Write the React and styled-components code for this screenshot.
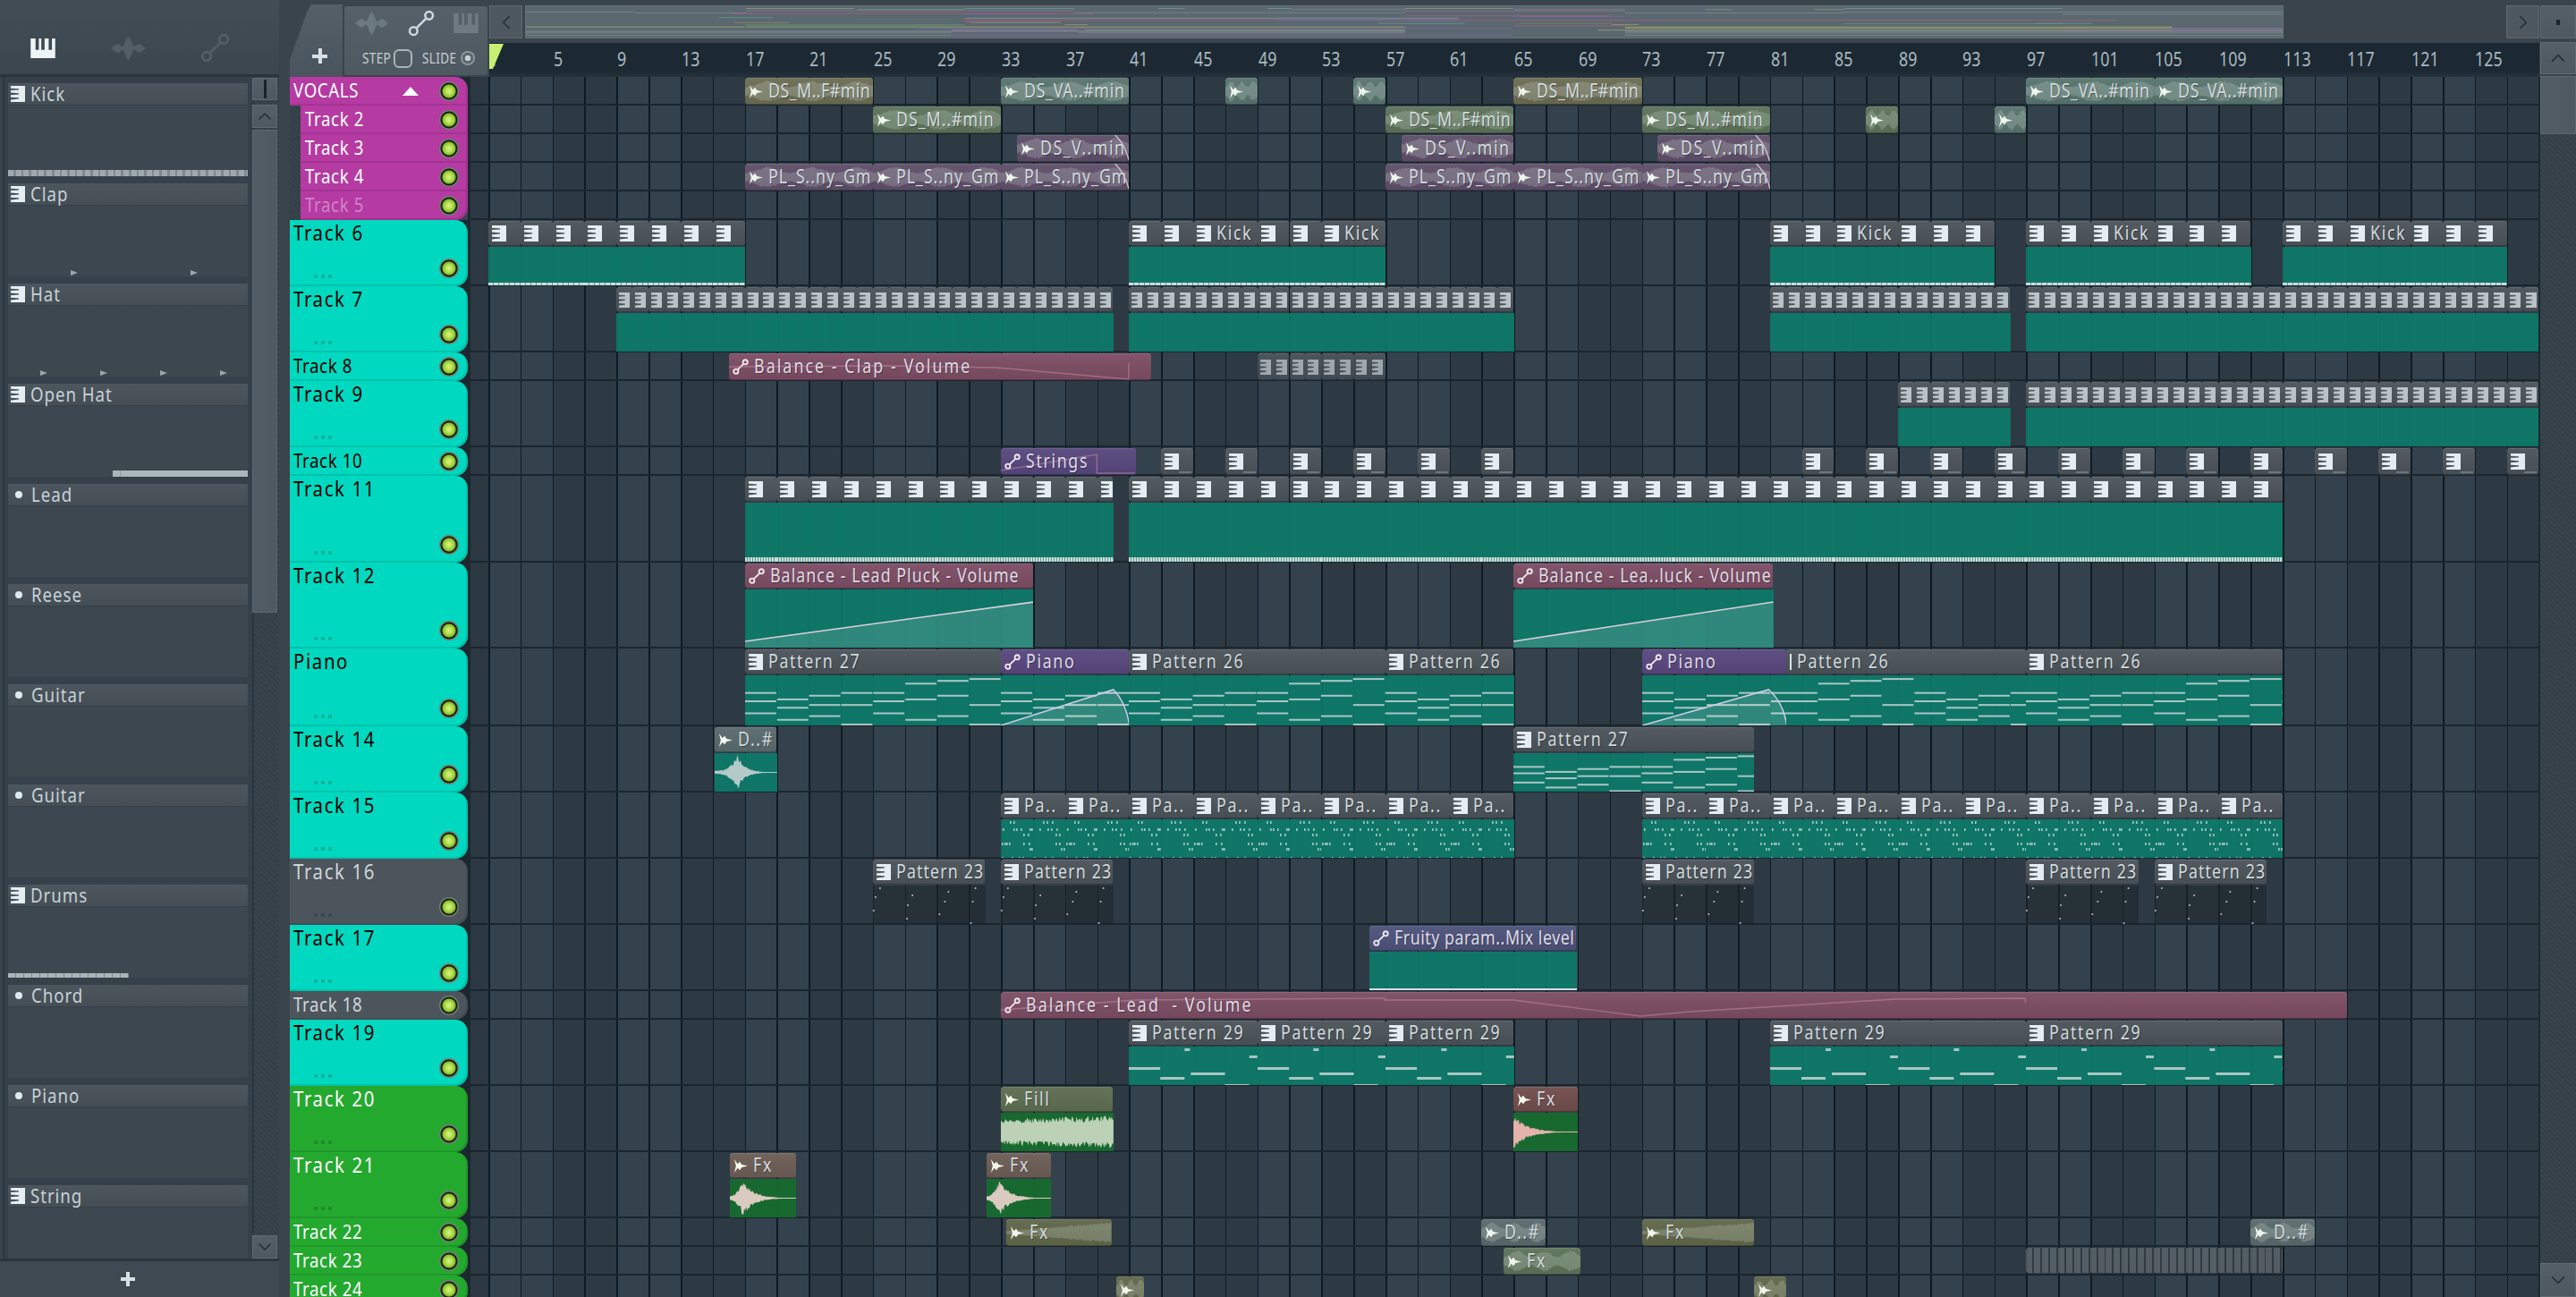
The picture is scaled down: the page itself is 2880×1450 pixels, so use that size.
import React from "react";
import styled, { createGlobalStyle, css } from "styled-components";
import { ChevronUp, ChevronDown, ChevronLeft, ChevronRight } from "lucide-react";

const BAR = 17.91;
const GUTTER = 20;
const barX = (bar) => (bar - 1) * BAR;

const GlobalStyle = createGlobalStyle`
  html, body {
    margin: 0;
    padding: 0;
    background: #3a444c;
  }
  * {
    box-sizing: border-box;
  }
`;

const FONT = `"Noto Sans", "Open Sans", "Liberation Sans", sans-serif`;

const hatch = `repeating-linear-gradient(45deg, #3a444c 0, #3a444c 2px, #343e46 2px, #343e46 4px)`;

// the app's face is a narrow one, nothing installed is that narrow
const narrowText = (lift = 0) => css`
  display: inline-block;
  flex: none;
  white-space: pre;
  transform-origin: 0 50%;
  transform: translateY(${lift}px) scaleX(0.85);
`;

/* ---------- drawings ---------- */

function PatternIcon({ w = 16, h = 18, dim }) {
  return (
    <svg width={w} height={h} viewBox="0 0 16 18" preserveAspectRatio="none" style={{ flex: "none", opacity: dim ? 0.72 : 1 }}>
      <path
        fill="#e4edf1"
        d="M0 0H16V18H0V15.4L9 14.6V13.2L0 12.8V10.2L9 9.6V8.2L0 7.6V5L9 4.6V3.2L0 2.8Z"
      />
    </svg>
  );
}

function AudioIcon() {
  return (
    <svg width="16" height="15" viewBox="0 0 17 14" preserveAspectRatio="none" style={{ flex: "none" }}>
      <path fill="#f6faf1" d="M1 0L5 5L7.5 2.5L10 5.5L17 7L10 8.5L7.5 11.5L5 9L1 14L3 7Z" />
    </svg>
  );
}

function AutoIcon({ size = 18, color = "#efe6ee", width = 1.9 }) {
  return (
    <svg width={size} height={size} viewBox="0 0 18 18" fill="none" style={{ flex: "none" }} stroke={color} strokeWidth={width}>
      <circle cx="3.8" cy="14.2" r="2.6" />
      <circle cx="14.2" cy="3.8" r="2.6" />
      <path d="M5.8 12.2L12.2 5.8" />
    </svg>
  );
}

function PianoIcon({ w, h, color }) {
  return (
    <svg width={w} height={h} viewBox="0 0 30 24" style={{ flex: "none" }}>
      <path fill={color} fillRule="evenodd" d="M0 0H30V24H0ZM6 0V14H10V0ZM13 0V14H17V0ZM22 0V14H26V0Z" />
    </svg>
  );
}

function WaveIcon({ w, h, color }) {
  return (
    <svg width={w} height={h} viewBox="0 0 40 28" style={{ flex: "none" }}>
      <path
        fill={color}
        d="M0 14C3 12 5 9 8 9C11 9 11 12 13 12C15 12 16 5 20 0C24 5 25 12 27 12C29 12 29 9 32 9C35 9 37 12 40 14C37 16 35 19 32 19C29 19 29 16 27 16C25 16 24 23 20 28C16 23 15 16 13 16C11 16 11 19 8 19C5 19 3 16 0 14Z"
      />
    </svg>
  );
}

const noise = (i, seed) => {
  const v = Math.sin(i * 12.9898 + seed * 78.233) * 43758.5453;
  return v - Math.floor(v);
};

function wavePoints(w, h, env, seed, rough = 0.22) {
  const top = [];
  const bottom = [];
  const mid = h / 2;
  for (let x = 0; x <= w; x += 1) {
    const t = x / Math.max(w, 1);
    const a = env(t) * mid;
    top.push(`${x},${(mid - a * (1 - rough + rough * noise(x, seed))).toFixed(1)}`);
    bottom.push(`${x},${(mid + a * (1 - rough + rough * noise(x + 400, seed))).toFixed(1)}`);
  }
  return top.concat(bottom.reverse()).join(" ");
}

const envelopes = {
  fill: (t) => 0.68 + 0.2 * t,
  decay: (t) => Math.max(0.03, 0.92 * Math.exp(-t * 4.6)),
  bell: (t) => Math.max(0.03, t < 0.2 ? 0.12 + 0.85 * Math.pow(t / 0.2, 2) : 0.97 * Math.exp(-(t - 0.2) * 6)),
  mid: (t) => Math.max(0.03, t < 0.36 ? 0.1 + 0.85 * Math.pow(t / 0.36, 3) : 0.95 * Math.exp(-(t - 0.36) * 8)),
  swell: (t) => 0.12 + 0.68 * t,
  hump: (t) => 0.35 + 0.45 * Math.sin(t * 9) * Math.sin(t * 9),
};

const NOTES_26 = [
  [18, 27, 40],
  [25, 34, 47],
  [21, 31, 43],
  [18, 31, 52],
  [18, 27, 40],
  [8, 25, 47],
  [5, 21, 43],
  [3, 31, 52],
];

const NOTES_29 = [
  [0, 35, 23],
  [35, 27, 34],
  [62, 6, 2],
  [69, 38, 29],
  [107, 27, 42],
  [134, 9, 10],
];

const DOT_ROWS = [
  [2, [10, 14, 47, 51, 57]],
  [10, [2, 14, 17, 22, 32, 34, 43, 52, 56, 62]],
  [16, [25, 30, 61, 65]],
  [26, [1, 4, 6, 9, 25, 31, 61, 65]],
  [32, [32, 34, 67, 70]],
  [42, [1, 12, 20, 24, 37, 49, 57]],
];

const SPARSE_DOTS = [
  [7, 2], [2, 12], [43, 10], [38, 21], [0, 27], [37, 36], [83, 6], [79, 17], [73, 31], [113, 2], [110, 17], [108, 41],
];

function NotesSvg({ kind, width, height, phase = 0 }) {
  const rects = [];
  if (kind === "notes26") {
    const scale = height / 54;
    const first = Math.floor(phase / 2);
    for (let c = 0; c * 2 * BAR < width; c += 1) {
      const col = NOTES_26[(first + c) % 8];
      col.forEach((y, i) => {
        rects.push(<rect key={`${c}-${i}`} x={c * 2 * BAR} y={y * scale} width={2 * BAR - 1} height="2" fill="#a9c7c2" />);
      });
    }
  }
  if (kind === "notes29") {
    for (let p = 0; p * 143.3 < width; p += 1) {
      NOTES_29.forEach(([x, w, y], i) => {
        rects.push(<rect key={`${p}-${i}`} x={p * 143.3 + x} y={y} width={w} height="3" fill="#a8c6c1" />);
      });
    }
  }
  if (kind === "dots") {
    for (let p = 0; p * 71.6 < width; p += 1) {
      DOT_ROWS.forEach(([y, xs], r) => {
        xs.forEach((x, i) => {
          rects.push(<rect key={`${p}-${r}-${i}`} x={p * 71.6 + x} y={y} width="1.6" height="3" fill="#a6c9c3" />);
        });
      });
    }
  }
  if (kind === "sparse") {
    SPARSE_DOTS.forEach(([x, y], i) => {
      rects.push(<rect key={i} x={x} y={y} width="1.6" height="2" fill="#aeb8bc" />);
    });
  }
  return <BodySvg viewBox={`0 0 ${width} ${height}`}>{rects}</BodySvg>;
}

/* ---------- clip data ---------- */

const TONES = {
  grey: "#4a5258",
  olive: "#6a6b52",
  sage: "#57746d",
  moss: "#5b7258",
  plum: "#5e4e69",
  pink: "#7b4c62",
  violet: "#56467c",
  indigo: "#4c5179",
  umber: "#6b5c55",
  rust: "#704c4b",
  fern: "#5d6c4f",
  slate: "#59696b",
  khaki: "#606649",
};

const labelSpacing = (label) => {
  if (/^DS_M\.\.F/.test(label)) return 0.5;
  if (/^DS_VA/.test(label)) return 0.75;
  if (/^DS_M\.\.#/.test(label)) return 1.1;
  if (/^DS_V\.\./.test(label)) return 1.7;
  if (/^PL_/.test(label)) return 1.1;
  if (/^Fruity/.test(label)) return 0.6;
  if (label === "Pattern 23") return 1.3;
  if (/luck/.test(label)) return 1.2;
  if (/^Balance/.test(label)) return 2.4;
  return 1.9;
};

const audio = (from, to, label, tone, extra = {}) => ({ kind: "audio", from, to, label, tone, ...extra });
const auto = (from, to, label, tone, extra = {}) => ({ kind: "auto", from, to, label, tone, ...extra });
const pat = (from, to, label, extra = {}) => ({ kind: "pattern", from, to, label, tone: "grey", ...extra });

// a run of pattern clips with the same length
const run = (from, to, step, extra = {}, labelAt) => {
  const list = [];
  for (let b = from, i = 0; b < to; b += step, i += 1) {
    list.push(pat(b, Math.min(b + step, to), labelAt ? labelAt(i) : "", extra));
  }
  return list;
};

const kicks = (from, ends) => {
  const list = [];
  let b = from;
  ends.forEach((len) => {
    list.push(pat(b, b + len, len === 4 ? "Kick" : "", { body: "strip" }));
    b += len;
  });
  return list;
};

const narrow = { narrow: true, body: "plain" };
const lane11 = { body: "dense" };

const tracks = [
  {
    name: "VOCALS", h: 32, color: "magenta", group: "head",
    clips: [
      audio(17, 25, "DS_M..F#min", "olive"),
      audio(33, 41, "DS_VA..#min", "sage"),
      audio(47, 49, "", "sage"),
      audio(55, 57, "", "sage"),
      audio(65, 73, "DS_M..F#min", "olive"),
      audio(97, 105, "DS_VA..#min", "sage"),
      audio(105, 113, "DS_VA..#min", "sage"),
    ],
  },
  {
    name: "Track 2", h: 32, color: "magenta", group: "child",
    clips: [
      audio(25, 33, "DS_M..#min", "moss"),
      audio(57, 65, "DS_M..F#min", "moss"),
      audio(73, 81, "DS_M..#min", "moss"),
      audio(87, 89, "", "moss"),
      audio(95, 97, "", "sage"),
    ],
  },
  {
    name: "Track 3", h: 32, color: "magenta", group: "child",
    clips: [
      audio(34, 41, "DS_V..min", "plum", { fade: true }),
      audio(58, 65, "DS_V..min", "plum"),
      audio(74, 81, "DS_V..min", "plum", { fade: true }),
    ],
  },
  {
    name: "Track 4", h: 32, color: "magenta", group: "child",
    clips: [
      audio(17, 25, "PL_S..ny_Gm", "plum"),
      audio(25, 33, "PL_S..ny_Gm", "plum"),
      audio(33, 41, "PL_S..ny_Gm", "plum", { fade: true }),
      audio(57, 65, "PL_S..ny_Gm", "plum"),
      audio(65, 73, "PL_S..ny_Gm", "plum"),
      audio(73, 81, "PL_S..ny_Gm", "plum", { fade: true }),
    ],
  },
  { name: "Track 5", h: 32, color: "magenta", group: "last", muted: true, clips: [] },
  {
    name: "Track 6", h: 74, color: "teal",
    clips: [
      ...run(1, 17, 2, { body: "strip" }),
      ...kicks(41, [2, 2, 4, 2, 2, 4]),
      ...kicks(81, [2, 2, 4, 2, 2, 2]),
      ...kicks(97, [2, 2, 4, 2, 2, 2]),
      ...kicks(113, [2, 2, 4, 2, 2, 2]),
    ],
  },
  {
    name: "Track 7", h: 74, color: "teal",
    clips: [...run(9, 40, 1, narrow), ...run(41, 65, 1, narrow), ...run(81, 96, 1, narrow), ...run(97, 130, 1, narrow)],
  },
  {
    name: "Track 8", h: 32, color: "teal",
    clips: [
      auto(16, 42.4, "Balance - Clap - Volume", "pink", { trace: [[0, 15], [180, 14], [300, 16], [447, 29], [447, 11]] }),
      ...run(49, 57, 1, { narrow: true, faded: true }),
    ],
  },
  { name: "Track 9", h: 74, color: "teal", clips: [...run(89, 96, 1, narrow), ...run(97, 130, 1, narrow)] },
  {
    name: "Track 10", h: 32, color: "teal",
    clips: [
      auto(33, 41.4, "Strings", "violet", { trace: [[0, 25], [107, 7], [107, 28], [150, 28]] }),
      ...[43, 47, 51, 55, 59, 63, 83, 87, 91, 95, 99, 103, 107, 111, 115, 119, 123, 127].map((b) => pat(b, b + 2, "")),
    ],
  },
  { name: "Track 11", h: 97, color: "teal", clips: [...run(17, 40, 2, lane11), ...run(41, 113, 2, lane11)] },
  {
    name: "Track 12", h: 96, color: "teal",
    clips: [
      auto(17, 35, "Balance - Lead Pluck - Volume", "pink", { body: "ramp" }),
      auto(65, 81.2, "Balance - Lea..luck - Volume", "pink", { body: "ramp" }),
    ],
  },
  {
    name: "Piano", h: 87, color: "teal",
    clips: [
      pat(17, 33, "Pattern 27", { body: "notes26" }),
      auto(33, 41, "Piano", "violet", { body: "peak", notes: "notes26" }),
      pat(41, 57, "Pattern 26", { body: "notes26" }),
      pat(57, 65, "Pattern 26", { body: "notes26" }),
      auto(73, 82, "Piano", "violet", { body: "peak", notes: "notes26" }),
      pat(82, 97, "Pattern 26", { body: "notes26", noIcon: true, phase: 8 }),
      pat(97, 113, "Pattern 26", { body: "notes26" }),
    ],
  },
  {
    name: "Track 14", h: 74, color: "teal",
    clips: [
      audio(15.1, 19, "D..#", "slate", { body: "wave", env: "mid", waveColor: "#b4cac8" }),
      pat(65, 80, "Pattern 27", { body: "notes26" }),
    ],
  },
  { name: "Track 15", h: 74, color: "teal", clips: [...run(33, 65, 4, { body: "dots" }, () => "Pa.."), ...run(73, 113, 4, { body: "dots" }, () => "Pa..")] },
  {
    name: "Track 16", h: 74, color: "grey",
    clips: [
      pat(25, 32, "Pattern 23", { body: "sparse" }),
      pat(33, 40, "Pattern 23", { body: "sparse" }),
      pat(73, 80, "Pattern 23", { body: "sparse" }),
      pat(97, 104, "Pattern 23", { body: "sparse" }),
      pat(105, 112, "Pattern 23", { body: "sparse" }),
    ],
  },
  {
    name: "Track 17", h: 74, color: "teal",
    clips: [auto(56, 68.9, "Fruity param..Mix level", "indigo", { body: "flat" })],
  },
  {
    name: "Track 18", h: 32, color: "grey",
    clips: [
      auto(33, 117, "Balance - Lead  - Volume", "pink", {
        trace: [[0, 20], [150, 9], [429, 7], [429, 9], [573, 9], [715, 27], [770, 22], [1000, 8], [1145, 7], [1145, 12]],
      }),
    ],
  },
  {
    name: "Track 19", h: 74, color: "teal",
    clips: [
      pat(41, 49, "Pattern 29", { body: "notes29" }),
      pat(49, 57, "Pattern 29", { body: "notes29" }),
      pat(57, 65, "Pattern 29", { body: "notes29" }),
      pat(81, 97, "Pattern 29", { body: "notes29" }),
      pat(97, 113, "Pattern 29", { body: "notes29" }),
    ],
  },
  {
    name: "Track 20", h: 74, color: "green",
    clips: [
      audio(33, 40, "Fill", "fern", { body: "wave", env: "fill", waveColor: "#bcd1b6" }),
      audio(65, 69, "Fx", "rust", { body: "wave", env: "decay", waveColor: "#e3b3ac" }),
    ],
  },
  {
    name: "Track 21", h: 74, color: "green",
    clips: [
      audio(16.1, 20.2, "Fx", "umber", { body: "wave", env: "bell", waveColor: "#dacac0" }),
      audio(32.1, 36.1, "Fx", "umber", { body: "wave", env: "bell", waveColor: "#dacac0" }),
    ],
  },
  {
    name: "Track 22", h: 32, color: "green",
    clips: [
      audio(33.35, 39.9, "Fx", "khaki", { env: "swell" }),
      audio(63, 67, "D..#", "slate"),
      audio(73, 80, "Fx", "khaki", { env: "swell" }),
      audio(111, 115, "D..#", "slate"),
    ],
  },
  {
    name: "Track 23", h: 32, color: "green",
    clips: [audio(64.4, 69.2, "Fx", "moss"), { kind: "pills", from: 97, to: 113 }],
  },
  {
    name: "Track 24", h: 32, color: "green",
    clips: [audio(40.2, 41.95, "", "khaki"), audio(80, 82, "", "khaki")],
  },
];

const channels = [
  { name: "Kick", icon: "pattern", notes: "dense" },
  { name: "Clap", icon: "pattern", notes: "clap" },
  { name: "Hat", icon: "pattern", notes: "hat" },
  { name: "Open Hat", icon: "pattern", notes: "long" },
  { name: "Lead", icon: "dot" },
  { name: "Reese", icon: "dot" },
  { name: "Guitar", icon: "dot" },
  { name: "Guitar", icon: "dot" },
  { name: "Drums", icon: "pattern", notes: "half" },
  { name: "Chord", icon: "dot" },
  { name: "Piano", icon: "dot" },
  { name: "String", icon: "pattern" },
];

const rulerLabels = [];
for (let b = 1; b <= 125; b += 4) rulerLabels.push(b);

const overviewLines = [
  [196, 277, 25, "#9c9b69"], [360, 442, 25, "#6f9c90"], [505, 525, 25, "#6f9c90"], [587, 605, 25, "#6f9c90"], [690, 771, 25, "#9c9b69"], [1019, 1183, 25, "#6f9c90"],
  [280, 360, 29, "#7f9c78"], [605, 690, 29, "#8f7f97"], [772, 855, 29, "#8f7f97"], [915, 935, 29, "#7f9c78"], [997, 1019, 29, "#7f9c78"],
  [196, 360, 33, "#8a7a97"], [360, 442, 33, "#8a7a97"], [690, 855, 34, "#8a7a97"],
  [31, 113, 37, "#7e8b90"], [113, 196, 41, "#7e8b90"], [855, 1019, 41, "#7e8b90"], [1019, 1348, 38, "#7e8b90"], [1183, 1348, 46, "#7e8b90"],
  [185, 457, 43, "#b45a80"], [360, 430, 46, "#7f62a8"], [442, 690, 40, "#7e8b90"], [690, 845, 52, "#b45a80"], [770, 855, 54, "#7f62a8"],
  [176, 216, 58, "#5f9c94"], [278, 350, 63, "#66757a"], [360, 730, 60, "#8d99a0"],
  [360, 1224, 68, "#b45a80"], [595, 730, 66, "#7772b0"], [1019, 1183, 80, "#77858a"], [360, 432, 73, "#b45a80"],
  [187, 228, 76, "#9a8a70"], [365, 432, 76, "#6f9c70"], [670, 735, 79, "#5f9c94"], [775, 845, 79, "#6f8c58"], [1163, 1205, 79, "#5f9c94"],
  [195, 360, 85, "#5fa868"], [435, 452, 84, "#a09a70"], [845, 865, 84, "#a09a70"], [772, 855, 88, "#b45a80"],
  [31, 195, 92, "#a7a96c"], [196, 360, 92, "#a7a96c"], [360, 690, 92, "#a7a96c"], [855, 1265, 92, "#a7a96c"],
  [325, 690, 98, "#7f72b0"], [690, 770, 97, "#7f62a8"], [1265, 1348, 98, "#a07ab0"], [855, 1265, 97, "#a7a96c"],
  [350, 445, 103, "#9a7aa0"], [450, 690, 104, "#a0a080"], [835, 1265, 104, "#a0a080"], [1185, 1348, 104, "#a07ab0"],
  [31, 690, 108, "#8f9fa0"], [855, 1348, 108, "#8f9fa0"],
  [31, 350, 114, "#7d8d90"], [445, 690, 114, "#7d8d90"], [855, 1348, 114, "#7d8d90"],
  [350, 770, 122, "#8a62b0"], [31, 350, 122, "#7d8d90"], [855, 1348, 122, "#7d8d90"],
];

/* ---------- left pane ---------- */

const Page = styled.div`
  width: 2880px;
  height: 1450px;
  overflow: hidden;
  display: grid;
  grid-template-columns: 324px 1fr;
  background: #3a444c;
  font-family: ${FONT};
`;

const LeftPane = styled.div`
  display: flex;
  flex-direction: column;
  height: 1450px;
  padding-right: 12px;
`;

const LeftTabs = styled.div`
  height: 86px;
  flex: none;
  display: flex;
  align-items: center;
  padding: 24px 0 0 33px;
  gap: 61px;
  background: linear-gradient(180deg, #434d55, #3c464e);
  border-bottom: 3px solid #2b353c;
`;

const LeftBody = styled.div`
  flex: 1;
  min-height: 0;
  display: flex;
  border-bottom: 3px solid #2b353c;
  background: #2f3a41;
`;

const ChannelList = styled.div`
  width: 282px;
  padding: 7px 4px 0 8px;
  display: flex;
  flex-direction: column;
  gap: 7px;
  overflow: hidden;
  background: #35404a;
  box-shadow: inset 3px 0 0 #3a444c, inset 5px 0 0 #2b353c;
`;

const ChannelHead = styled.div`
  height: 25px;
  margin: 0 1px;
  display: flex;
  align-items: center;
  gap: 6px;
  padding-left: 3px;
  background: linear-gradient(180deg, #4d565d, #454e55);
  border-bottom: 1px solid #353f47;
  flex: none;
`;

const ChannelName = styled.span`
  ${narrowText(-1)}
  color: #c6d2d8;
  font-size: 22px;
  letter-spacing: 1.1px;
  line-height: 24px;
`;

const ChannelDot = styled.span`
  width: 8px;
  height: 8px;
  border-radius: 50%;
  background: #dcebf2;
  margin: 0 4px 0 5px;
  flex: none;
`;

const Channel = styled.div`
  flex: none;
`;

const ChannelBody = styled.div`
  height: 80px;
  background: #3d4750;
  border: 1px solid #364049;
  border-top: 0;
  display: flex;
  flex-direction: column;
  justify-content: flex-end;
`;

const DenseStrip = styled.div`
  height: 7px;
  background: repeating-linear-gradient(90deg, #a0a9ad 0, #a0a9ad 6px, #7f898f 6px, #7f898f 8.6px);
`;

const HalfStrip = styled.div`
  height: 5px;
  width: 135px;
  background: repeating-linear-gradient(90deg, #aab4b8 0, #aab4b8 8px, #7f898f 8px, #7f898f 9px);
`;

const LongNote = styled.div`
  height: 7px;
  width: 151px;
  margin-left: auto;
  background: linear-gradient(90deg, #aab6ba 0, #aab6ba 8px, #8d989d 8px, #8d989d 9px, #aab6ba 9px);
`;

const TriangleRow = styled.div`
  display: flex;
  height: 7px;
  padding-left: ${(p) => p.$offset}px;
  gap: ${(p) => p.$gap}px;
`;

const Triangle = styled.span`
  width: 0;
  height: 0;
  border-left: 8px solid #9ba6ab;
  border-top: 3.5px solid transparent;
  border-bottom: 3.5px solid transparent;
`;

const ScrollColumn = styled.div`
  width: 30px;
  padding: 1px 2px 0 0;
  display: flex;
  flex-direction: column;
  background: ${hatch};
  box-shadow: inset 2px 0 0 #2b353c;
`;

const ScrollButton = styled.div`
  height: ${(p) => p.$h}px;
  margin-top: ${(p) => p.$top || 0}px;
  flex: none;
  display: flex;
  align-items: center;
  justify-content: center;
  background: linear-gradient(180deg, #555f67, #4e5860);
  border: 1px solid #5f6a71;
  color: #1f2c35;
`;

const ScrollThumb = styled.div`
  height: ${(p) => p.$h}px;
  margin-top: 2px;
  flex: none;
  background: linear-gradient(90deg, #525c64, #4f5961);
  border: 1px solid #5c676e;
`;

const ScrollGap = styled.div`
  flex: 1;
`;

const LockBar = styled.span`
  width: 3px;
  height: 21px;
  background: #18232b;
`;

const AddBar = styled.div`
  height: 40px;
  flex: none;
  display: flex;
  align-items: center;
  justify-content: center;
  padding-right: 26px;
  background: #3f4951;
`;

const PlusMark = styled.span`
  width: ${(p) => p.$size}px;
  height: ${(p) => p.$size}px;
  display: block;
  background:
    linear-gradient(#d8e0e3, #d8e0e3) center / 100% 4px no-repeat,
    linear-gradient(#d8e0e3, #d8e0e3) center / 4px 100% no-repeat;
`;

/* ---------- playlist head ---------- */

const Playlist = styled.div`
  display: flex;
  height: 1450px;
  min-width: 0;
`;

const Arrange = styled.div`
  width: 2516px;
  display: flex;
  flex-direction: column;
  background: #1c2830;
`;

const TopBar = styled.div`
  height: 86px;
  flex: none;
  display: flex;
  background: #3a444c;
`;

const AddTab = styled.div`
  width: 59px;
  height: 81px;
  margin-top: 5px;
  flex: none;
  display: flex;
  justify-content: center;
  align-items: flex-end;
  padding: 0 0 15px 8px;
  background: linear-gradient(180deg, #555f67, #4a545c);
  clip-path: polygon(0 100%, 0 76%, 20px 8%, 24px 0, 100% 0, 100% 100%);
`;

const ToolBox = styled.div`
  width: 160px;
  height: 77px;
  margin: 7px 0 0 2px;
  flex: none;
  display: flex;
  flex-direction: column;
  padding: 5px 9px 0 10px;
  background: linear-gradient(180deg, #566069, #4e5860);
  border-radius: 2px;
`;

const ToolIcons = styled.div`
  display: flex;
  justify-content: space-between;
  align-items: center;
  height: 28px;
`;

const ToolSwitches = styled.div`
  display: flex;
  align-items: center;
  margin-top: 14px;
  padding-left: 10px;
`;

const ToolLabel = styled.span`
  ${narrowText(0)}
  width: ${(p) => p.$w}px;
  color: #c8d1d5;
  font-size: 16px;
  letter-spacing: 0.4px;
`;

const StepBox = styled.span`
  width: 21px;
  height: 21px;
  margin: 0 11px 0 5px;
  flex: none;
  border: 2px solid #a9b3b8;
  border-radius: 6px;
`;

const SlideDot = styled.span`
  width: 16px;
  height: 16px;
  margin-left: 7px;
  flex: none;
  border-radius: 50%;
  background: radial-gradient(circle, #c6cfd3 0, #c6cfd3 3px, #5d686f 3.5px, #5d686f 6px, #8d979c 6.5px);
`;

const TimelineHead = styled.div`
  width: 2292px;
  margin-left: 2px;
  flex: none;
  display: flex;
  flex-direction: column;
`;

const NavRow = styled.div`
  height: 37px;
  margin-top: 6px;
  flex: none;
  display: flex;
`;

const NavButton = styled.div`
  width: 37px;
  flex: none;
  display: flex;
  align-items: center;
  justify-content: center;
  background: #4e5860;
  border: 1px solid #5d686f;
  color: #22303a;
`;

const Overview = styled.div`
  width: 1966px;
  margin-left: 3px;
  flex: none;
  background: #5a686f;
  border: 1px solid #66727a;
`;

const OverviewSvg = styled.svg`
  display: block;
  width: 100%;
  height: 100%;
`;

const NavFill = styled.div`
  flex: 1;
`;

const Ruler = styled.div`
  height: 38px;
  margin-top: 5px;
  flex: none;
  display: flex;
  position: relative;
  background: linear-gradient(180deg, #1c2932 0, #1c2932 82%, #26333c 100%);
  overflow: hidden;
`;

const RulerMark = styled.div`
  width: ${BAR * 4}px;
  flex: none;
  padding: 4px 0 0 0;
`;

const RulerNumber = styled.span`
  ${narrowText(0)}
  color: #aab8c0;
  font-size: 21px;
  line-height: 28px;
`;

const Marker = styled.svg`
  position: absolute;
  left: 0;
  top: 1px;
`;

/* ---------- rows ---------- */

const Rows = styled.div`
  flex: 1;
  min-height: 0;
  overflow: hidden;
`;

const Row = styled.div`
  height: ${(p) => p.$h}px;
  display: flex;
  background: #1c2830;
`;

const labelColors = {
  magenta: "#b53aa2",
  teal: "#00d9bf",
  green: "#24a92f",
  grey: "#4c555b",
};

const LabelSlot = styled.div`
  width: 199px;
  flex: none;
  display: flex;
  background: ${(p) => (p.$indent ? hatch : "none")};
  padding-left: ${(p) => (p.$indent ? 12 : 0)}px;
`;

const Label = styled.div`
  flex: 1;
  display: flex;
  flex-direction: ${(p) => (p.$tall ? "column" : "row")};
  justify-content: space-between;
  align-items: ${(p) => (p.$tall ? "flex-start" : "center")};
  padding: ${(p) => (p.$tall ? "0 10px 9px 4px" : "0 10px 0 4px")};
  padding-left: ${(p) => (p.$indent ? 5 : 4)}px;
  background: ${(p) => labelColors[p.$color]};
  border-radius: ${(p) => p.$radius};
  box-shadow: inset -2px -2px 0 rgba(0, 0, 0, 0.1);
`;

const TrackName = styled.span`
  ${(p) => narrowText(p.$tall ? -1 : -2)}
  font-size: ${(p) => (p.$tall ? 24 : 22)}px;
  letter-spacing: ${(p) => (p.$tall ? 1.9 : 0.7)}px;
  line-height: ${(p) => (p.$tall ? 30 : 28)}px;
  color: ${(p) => p.$color};
`;

const LabelFoot = styled.div`
  display: flex;
  align-self: stretch;
  justify-content: space-between;
  align-items: flex-end;
`;

const DotsMark = styled.span`
  margin: 0 0 0 23px;
  width: 20px;
  height: 4px;
  background: repeating-linear-gradient(90deg, rgba(0, 0, 0, 0.18) 0, rgba(0, 0, 0, 0.18) 4px, transparent 4px, transparent 8px);
`;

const Led = styled.span`
  width: 22px;
  height: 22px;
  flex: none;
  border-radius: 50%;
  background: radial-gradient(circle at 50% 50%, #d8f48c 0, #b2e04f 4px, #86b82a 7px, #16210f 8px, #16210f 9px, #78847c 10px, #6d7873 11px);
`;

const GroupArrow = styled.span`
  width: 0;
  height: 0;
  margin-left: auto;
  margin-right: 23px;
  border-left: 9px solid transparent;
  border-right: 9px solid transparent;
  border-bottom: 10px solid #fff;
`;

const Seam = styled.div`
  width: 3px;
  flex: none;
  background: #1c2830;
`;

const Lane = styled.div`
  position: relative;
  width: 2312px;
  flex: none;
  overflow: hidden;
  background-color: #2c3943;
  background-image:
    repeating-linear-gradient(90deg, #0f1a22 0, #0f1a22 1.6px, rgba(0, 0, 0, 0) 1.6px, rgba(0, 0, 0, 0) ${BAR * 2}px),
    repeating-linear-gradient(90deg, #33424d 0, #33424d ${BAR * 4}px, #2d3a44 ${BAR * 4}px, #2d3a44 ${BAR * 8}px);
  background-size: calc(100% - ${GUTTER}px) 100%;
  background-position: right top;
  background-repeat: no-repeat;
  box-shadow: inset 0 -2px 0 #1a262e;
`;

const LaneEnd = styled.div`
  width: 2px;
  flex: none;
  background: #1c2830;
`;

/* ---------- clips ---------- */

const ClipBox = styled.div`
  position: absolute;
  top: 1px;
  bottom: 1px;
  display: flex;
  flex-direction: column;
`;

const ClipHead = styled.div`
  position: relative;
  height: ${(p) => (p.$tall ? "28px" : "100%")};
  flex: none;
  display: flex;
  align-items: center;
  gap: 6px;
  padding-left: ${(p) => (p.$narrow ? 3 : 4)}px;
  overflow: hidden;
  border-radius: 3px;
  background: linear-gradient(180deg, rgba(255, 255, 255, 0.05), rgba(0, 0, 0, 0.05)), ${(p) => TONES[p.$tone]};
  box-shadow: inset 0 1px 0 rgba(255, 255, 255, 0.1), inset 0 -1px 0 rgba(0, 0, 0, 0.25);
  opacity: ${(p) => (p.$faded ? 0.8 : 1)};
  margin-bottom: ${(p) => (p.$tall ? 1 : 0)}px;
`;

const ClipName = styled.span`
  ${narrowText(-1)}
  position: relative;
  color: ${(p) => p.$color};
  font-size: 21px;
  line-height: 26px;
  letter-spacing: ${(p) => p.$spacing}px;
  text-shadow: 1px 1px 0 rgba(0, 0, 0, 0.35);
`;

const HeadWave = styled.svg`
  position: absolute;
  left: 0;
  top: 0;
  width: 100%;
  height: 100%;
  opacity: ${(p) => p.$alpha};
`;

const bodyFills = {
  teal: "rgba(11, 124, 108, 0.9)",
  green: "rgba(24, 106, 48, 0.97)",
  dark: "rgba(30, 38, 44, 0.6)",
};

const ClipBody = styled.div`
  position: relative;
  flex: 1;
  min-height: 0;
  margin-right: -0.5px;
  background: ${(p) => bodyFills[p.$fill]};
`;

const StripNotes = styled.div`
  position: absolute;
  left: 0;
  right: 0;
  bottom: 0;
  height: ${(p) => p.$h}px;
  background: repeating-linear-gradient(90deg, #c9dcd8 0, #c9dcd8 ${(p) => p.$w}px, #5f9c90 ${(p) => p.$w}px, #5f9c90 ${(p) => p.$w + 1}px);
`;

const FloorLine = styled.div`
  position: absolute;
  left: 0;
  right: 0;
  bottom: 0;
  height: 2px;
  background: #d8dcea;
`;

const BodySvg = styled.svg.attrs({ preserveAspectRatio: "none" })`
  position: absolute;
  inset: 0;
  width: 100%;
  height: 100%;
  display: block;
`;

const Pills = styled.div`
  position: absolute;
  top: 1px;
  bottom: 3px;
  background: repeating-linear-gradient(90deg, #5b6368 0, #5b6368 7px, #2f3b44 7px, #2f3b44 8.95px);
  border-radius: 3px;
  opacity: 0.85;
`;

const TinyMark = styled.span`
  position: absolute;
  right: 2px;
  bottom: 2px;
  width: 14px;
  height: 2px;
  background: #6d777d;
`;

const EmptyTick = styled.span`
  width: 2px;
  height: 18px;
  background: #d8e0e3;
  flex: none;
`;

function ClipIcon({ clip }) {
  if (clip.noIcon) return <EmptyTick />;
  if (clip.kind === "audio") return <AudioIcon />;
  if (clip.kind === "auto") return <AutoIcon />;
  if (clip.narrow) return <PatternIcon w={12} h={17} dim />;
  return <PatternIcon />;
}

function Body({ clip, width, height }) {
  const { body } = clip;
  if (body === "strip") return <ClipBody $fill="teal"><StripNotes $h={3} $w={5} /></ClipBody>;
  if (body === "dense") return <ClipBody $fill="teal"><StripNotes $h={5} $w={2} /></ClipBody>;
  if (body === "plain") return <ClipBody $fill="teal" />;
  if (body === "flat") return <ClipBody $fill="teal"><FloorLine /></ClipBody>;
  if (body === "sparse") {
    return <ClipBody $fill="dark"><NotesSvg kind="sparse" width={width} height={height} /></ClipBody>;
  }
  if (body === "notes26" || body === "notes29" || body === "dots") {
    return <ClipBody $fill="teal"><NotesSvg kind={body} width={width} height={height} phase={clip.phase || 0} /></ClipBody>;
  }
  if (body === "ramp") {
    return (
      <ClipBody $fill="teal">
        <BodySvg viewBox={`0 0 ${width} ${height}`}>
          <polygon points={`0,${height} 0,${height - 7} ${width},14 ${width},${height}`} fill="rgba(255,255,255,0.14)" />
          <polyline points={`0,${height - 7} ${width},14`} fill="none" stroke="#dcd0da" strokeWidth="1.6" />
        </BodySvg>
      </ClipBody>
    );
  }
  if (body === "peak") {
    const px = width * 0.875;
    const d = `M0 ${height} L${px} 16 Q${width - 4} 30 ${width} ${height}`;
    return (
      <ClipBody $fill="teal">
        <NotesSvg kind={clip.notes} width={width} height={height} />
        <BodySvg viewBox={`0 0 ${width} ${height}`}>
          <path d={d} fill="rgba(255,255,255,0.14)" stroke="none" />
          <path d={d} fill="none" stroke="#cfcce8" strokeWidth="1.6" />
        </BodySvg>
      </ClipBody>
    );
  }
  if (body === "wave") {
    const fill = clip.tone === "slate" ? "teal" : "green";
    return (
      <ClipBody $fill={fill}>
        <BodySvg viewBox={`0 0 ${width} ${height}`}>
          <polygon points={wavePoints(width, height, envelopes[clip.env], clip.from, 0.4)} fill={clip.waveColor} />
        </BodySvg>
      </ClipBody>
    );
  }
  return null;
}

function Clip({ clip, rowH }) {
  const left = GUTTER + barX(clip.from);
  const width = (clip.to - clip.from) * BAR;
  if (clip.kind === "pills") {
    return <Pills style={{ left, width }} />;
  }
  const tall = Boolean(clip.body);
  const textColor = clip.tone === "pink" || clip.tone === "violet" || clip.tone === "indigo" ? "#dfdbe4" : "#d2dade";
  const faintWave = clip.kind === "audio" && !clip.body;
  const bodyH = rowH - 31;
  return (
    <ClipBox style={{ left, width }}>
      <ClipHead $tall={tall} $tone={clip.tone} $narrow={clip.narrow} $faded={clip.faded}>
        {faintWave && (
          <HeadWave viewBox={`0 0 ${Math.round(width)} 30`} preserveAspectRatio="none" $alpha={0.22}>
            <polygon points={wavePoints(Math.round(width), 30, envelopes[clip.env || "hump"], clip.from + 3)} fill="#d6e2dc" />
          </HeadWave>
        )}
        {clip.trace && (
          <HeadWave viewBox={`0 0 ${Math.round(width)} 30`} preserveAspectRatio="none" $alpha={0.5}>
            <polyline points={clip.trace.map((p) => p.join(",")).join(" ")} fill="none" stroke="#c98fac" strokeWidth="1.4" />
          </HeadWave>
        )}
        <ClipIcon clip={clip} />
        {clip.label && <ClipName $color={textColor} $spacing={labelSpacing(clip.label)}>{clip.label}</ClipName>}
        {clip.fade && (
          <HeadWave viewBox={`0 0 ${Math.round(width)} 30`} preserveAspectRatio="none" $alpha={1}>
            <path d={`M${width - 16} 0 Q${width - 5} 10 ${width} 30`} fill="none" stroke="#cfc6d4" strokeWidth="1.3" />
          </HeadWave>
        )}
        {clip.kind === "pattern" && !clip.label && !clip.narrow && !clip.body && <TinyMark />}
      </ClipHead>
      {clip.body && <Body clip={clip} width={Math.round(width)} height={bodyH} />}
    </ClipBox>
  );
}

function TrackRow({ track }) {
  const tall = track.h > 32;
  const textColor = track.muted
    ? "#cf84c5"
    : track.color === "teal"
      ? "#000"
      : track.color === "grey"
        ? "#cfd6da"
        : "#fff";
  const indent = track.group === "child" || track.group === "last";
  let radius = "0 14px 14px 0";
  if (track.group === "head") radius = "0 14px 0 0";
  if (track.group === "child") radius = "0";
  if (track.group === "last") radius = "0 0 14px 0";
  const showArrow = track.group === "head";
  return (
    <Row $h={track.h}>
      <LabelSlot $indent={indent}>
        <Label $tall={tall} $color={track.color} $indent={indent} $radius={radius}>
          <TrackName $tall={tall} $color={textColor}>{track.name}</TrackName>
          {tall ? (
            <LabelFoot>
              <DotsMark />
              <Led />
            </LabelFoot>
          ) : (
            <>
              {showArrow && <GroupArrow />}
              <Led />
            </>
          )}
        </Label>
      </LabelSlot>
      <Seam />
      <Lane>
        {track.clips.map((clip, i) => (
          <Clip key={i} clip={clip} rowH={track.h} />
        ))}
      </Lane>
      <LaneEnd />
    </Row>
  );
}

function ChannelNotes({ kind }) {
  if (kind === "dense") return <DenseStrip />;
  if (kind === "half") return <HalfStrip />;
  if (kind === "long") return <LongNote />;
  if (kind === "clap") {
    return (
      <TriangleRow $offset={70} $gap={126}>
        <Triangle />
        <Triangle />
      </TriangleRow>
    );
  }
  if (kind === "hat") {
    return (
      <TriangleRow $offset={36} $gap={59}>
        <Triangle />
        <Triangle />
        <Triangle />
        <Triangle />
      </TriangleRow>
    );
  }
  return null;
}

const VScrollColumn = styled.div`
  width: 40px;
  flex: none;
  display: flex;
  flex-direction: column;
  background: linear-gradient(180deg, #3a444c 0, #3a444c 86px, transparent 86px), ${hatch};
`;

const SmallSquare = styled.span`
  width: 4px;
  height: 6px;
  background: #1a252d;
`;

function VerticalScroll() {
  return (
    <VScrollColumn>
      <ScrollButton $h={37} $top={6}><SmallSquare /></ScrollButton>
      <ScrollButton $h={36} $top={4}><ChevronUp size={26} strokeWidth={1.5} /></ScrollButton>
      <ScrollThumb $h={65} />
      <ScrollGap />
      <ScrollButton $h={38}><ChevronDown size={26} strokeWidth={1.5} /></ScrollButton>
    </VScrollColumn>
  );
}

export default function App() {
  return (
    <>
      <GlobalStyle />
      <Page>
        <LeftPane>
          <LeftTabs>
            <PianoIcon w={30} h={22} color="#eef3f5" />
            <WaveIcon w={39} h={28} color="#525d64" />
            <AutoIcon size={33} color="#525d64" width={1.6} />
          </LeftTabs>
          <LeftBody>
            <ChannelList>
              {channels.map((ch, i) => (
                <Channel key={i}>
                  <ChannelHead>
                    {ch.icon === "pattern" ? <PatternIcon /> : <ChannelDot />}
                    <ChannelName>{ch.name}</ChannelName>
                  </ChannelHead>
                  <ChannelBody>
                    <ChannelNotes kind={ch.notes} />
                  </ChannelBody>
                </Channel>
              ))}
            </ChannelList>
            <ScrollColumn>
              <ScrollButton $h={25}><LockBar /></ScrollButton>
              <ScrollButton $h={26} $top={5}><ChevronUp size={24} strokeWidth={1.5} /></ScrollButton>
              <ScrollThumb $h={540} />
              <ScrollGap />
              <ScrollButton $h={26}><ChevronDown size={24} strokeWidth={1.5} /></ScrollButton>
            </ScrollColumn>
          </LeftBody>
          <AddBar>
            <PlusMark $size={16} />
          </AddBar>
        </LeftPane>
        <Playlist>
          <Arrange>
            <TopBar>
              <AddTab>
                <PlusMark $size={17} />
              </AddTab>
              <ToolBox>
                <ToolIcons>
                  <WaveIcon w={41} h={26} color="#6d7980" />
                  <AutoIcon size={30} color="#d0d8db" width={1.5} />
                  <PianoIcon w={30} h={22} color="#6f7a81" />
                </ToolIcons>
                <ToolSwitches>
                  <ToolLabel $w={30}>STEP</ToolLabel>
                  <StepBox />
                  <ToolLabel $w={36}>SLIDE</ToolLabel>
                  <SlideDot />
                </ToolSwitches>
              </ToolBox>
              <TimelineHead>
                <NavRow>
                  <NavButton><ChevronLeft size={26} strokeWidth={1.5} /></NavButton>
                  <Overview>
                    <OverviewSvg viewBox="31 18 1317 114" preserveAspectRatio="none">
                      {overviewLines.map(([x1, x2, y, color], i) => (
                        <rect key={i} x={x1} y={y} width={x2 - x1} height="2.5" fill={color} />
                      ))}
                    </OverviewSvg>
                  </Overview>
                  <NavFill />
                  <NavButton><ChevronRight size={26} strokeWidth={1.5} /></NavButton>
                </NavRow>
                <Ruler>
                  {rulerLabels.map((n) => (
                    <RulerMark key={n}>
                      <RulerNumber>{n}</RulerNumber>
                    </RulerMark>
                  ))}
                  <Marker width="16" height="28" viewBox="0 0 16 28">
                    <path d="M0 0H16L4 28H0Z" fill="#c8ee72" />
                  </Marker>
                </Ruler>
              </TimelineHead>
            </TopBar>
            <Rows>
              {tracks.map((t) => (
                <TrackRow key={t.name} track={t} />
              ))}
            </Rows>
          </Arrange>
          <VerticalScroll />
        </Playlist>
      </Page>
    </>
  );
}
